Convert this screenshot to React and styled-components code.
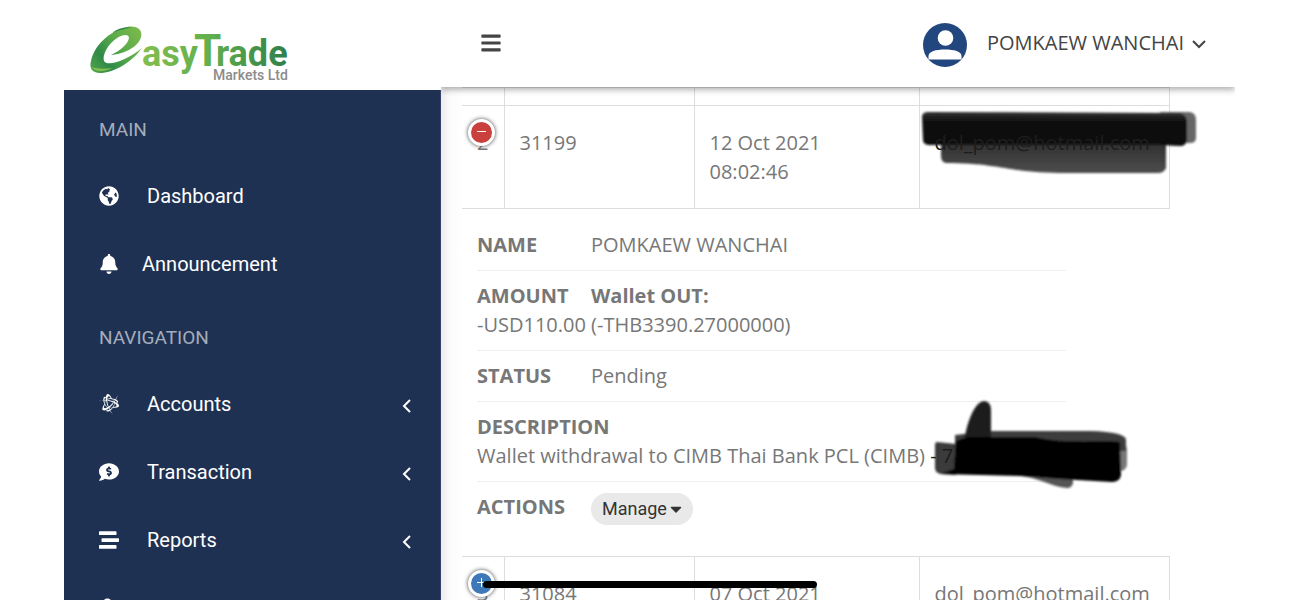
import React from "react";
import styled, { createGlobalStyle } from "styled-components";
import { FaBell, FaBattleNet, FaCommentDollar, FaStream, FaBars, FaCaretDown, FaGlobeAmericas, FaUserCog } from "react-icons/fa";

const Global = createGlobalStyle`
  *, *::before, *::after { box-sizing: border-box; }
  body { margin: 0; background: #fff; font-family: "Open Sans", sans-serif; color: #777; }
`;

const Page = styled.div`
  display: grid;
  grid-template-columns: minmax(240px, 377px) minmax(0, 1fr);
  height: 100vh;
  overflow: hidden;
  padding: 0 64px;
  background: #fff;
`;

const Sidebar = styled.aside`
  display: flex;
  flex-direction: column;
  min-height: 0;
`;

const Brand = styled.a`
  display: block;
  flex: none;
  height: 90px;
  padding: 20px 0 0 20px;
  svg { display: block; }
`;

const Nav = styled.nav`
  flex: 1;
  min-height: 0;
  overflow: hidden;
  background: #1f3152;
  border-right: 1px solid #34426f;
  font-family: Roboto, sans-serif;
`;

const NavHeading = styled.h2`
  margin: 0;
  padding: 8px 35px 0;
  font-size: 19px;
  font-weight: 400;
  line-height: 64px;
  color: #a5adba;
`;

const NavLink = styled.a`
  display: flex;
  align-items: center;
  height: 68px;
  padding: 0 28px 0 35px;
  color: #fff;
  font-size: 20px;
  text-decoration: none;
  gap: ${(p) => (p.$tight ? "23px" : "28px")};
  > svg:first-child { flex: none; }
`;

const NavLabel = styled.span`
  flex: 1;
`;

const Chevron = styled.svg`
  flex: none;
  margin-top: 4px;
`;

const Main = styled.main`
  display: flex;
  flex-direction: column;
  min-width: 0;
  min-height: 0;
`;

const TopBar = styled.header`
  position: relative;
  z-index: 2;
  flex: none;
  display: flex;
  align-items: center;
  justify-content: space-between;
  height: 87px;
  padding: 0 29px 2px 39px;
  background: #fff;
  box-shadow: 0 3px 6px rgba(0, 0, 0, 0.3);
  clip-path: inset(0 0 -12px 0);
`;

const IconButton = styled.button`
  display: flex;
  padding: 0;
  border: 0;
  background: none;
  color: #444;
`;

const UserButton = styled(IconButton)`
  align-items: center;
  padding-top: 4px;
  font: 400 20px "Open Sans", sans-serif;
  color: #444;
`;

const UserName = styled.span`
  margin: 0 8px 0 20px;
  line-height: 28px;
  padding-bottom: 4px;
`;

const Content = styled.section`
  flex: 1;
  min-height: 0;
  overflow: hidden;
  padding: 0 65px 0 21px;
  background: linear-gradient(90deg, #ececec 0, #fbfbfb 9px, #fff 20px);
`;

const Table = styled.table`
  width: 100%;
  table-layout: fixed;
  border-collapse: collapse;
  font-size: 20px;
  line-height: 29px;
`;

const Column = styled.col`
  width: ${(p) => p.$width};
`;

const Cell = styled.td`
  position: relative;
  height: ${(p) => (p.$stub ? "18px" : "103px")};
  padding: ${(p) => (p.$stub ? "0" : "22px 15px")};
  border: 1px solid #ddd;
  vertical-align: top;
  &:first-child { border-left: 0; }
`;

const DetailCell = styled.td`
  padding: 11px 104px 20px 15px;
`;

const Toggle = styled.button`
  position: absolute;
  top: 13px;
  left: 6px;
  display: flex;
  align-items: center;
  justify-content: center;
  width: 27px;
  height: 27px;
  padding: 0;
  border: 3px solid #fff;
  border-radius: 50%;
  background: ${(p) => (p.$open ? "#c9403c" : "#3f78b8")};
  box-shadow: 0 0 4px #444;
`;

const Details = styled.ul`
  margin: 0;
  padding: 0;
  list-style: none;
`;

const Detail = styled.li`
  padding: 10px 0 11px;
  border-bottom: 1px solid #efefef;
  white-space: nowrap;
  &:last-child { border-bottom: 0; }
`;

const Term = styled.strong`
  display: inline-block;
  min-width: 114px;
  font-weight: 700;
`;

const Manage = styled.button`
  display: inline-flex;
  align-items: center;
  height: 32px;
  padding: 0 8px 0 11px;
  border: 0;
  border-radius: 16px;
  background: #e9e9e9;
  color: #333;
  font: 400 18px Roboto, sans-serif;
  vertical-align: middle;
`;

const Scribble = styled.svg`
  position: absolute;
  z-index: 3;
  left: ${(p) => p.$left}px;
  top: ${(p) => p.$top}px;
  overflow: visible;
  pointer-events: none;
`;

const Anchor = styled.span`
  position: relative;
`;

const Inked = styled.span`
  position: relative;
  z-index: 4;
  color: #1d1d1d;
`;

const HomeBar = styled.div`
  position: fixed;
  z-index: 5;
  bottom: 12px;
  left: 50%;
  width: 334px;
  height: 7px;
  border-radius: 4px;
  background: #000;
  transform: translateX(-50%);
`;

function Logo() {
  return (
    <svg width="212" height="64" viewBox="84 20 212 64" role="img" aria-label="EasyTrade Markets Ltd">
      <defs>
        <linearGradient id="word" gradientUnits="userSpaceOnUse" x1="142" y1="0" x2="290" y2="0">
          <stop offset="0" stopColor="#83bd50" />
          <stop offset="0.45" stopColor="#62b04c" />
          <stop offset="1" stopColor="#2f7d4a" />
        </linearGradient>
        <linearGradient id="swoosh" gradientUnits="userSpaceOnUse" x1="92" y1="70" x2="140" y2="30">
          <stop offset="0" stopColor="#4fa54a" />
          <stop offset="0.25" stopColor="#2f8a48" />
          <stop offset="0.6" stopColor="#5aab4a" />
          <stop offset="1" stopColor="#7cba4c" />
        </linearGradient>
      </defs>
      <path fill="url(#swoosh)" d="M142 48C131 63 113 73 100 73C92 73 89 68 91 61C94 46 109 31 127 27C137 25 143 30 141 37C139 46 125 54 111 55C120 51 128 44 129 38C129 34 123 34 117 38C108 44 102 55 104 61C107 67 126 61 142 48Z" />
      <path fill="#86c04f" d="M92 67C94 72 104 72 113 68C104 69 96 69 92 67Z" />
      <path fill="#2e8547" d="M112 33C118 28 127 26 132 28C127 28 119 30 112 33Z" />
      <g fill="url(#word)" fontFamily="Roboto, sans-serif" fontWeight="700">
        <text x="142" y="66" fontSize="36">asy</text>
        <text x="194" y="66" fontSize="44">T</text>
        <text x="216" y="66" fontSize="36">rade</text>
      </g>
      <text x="213" y="80" fill="#8b8b8b" fontFamily="Roboto, sans-serif" fontWeight="500" fontSize="14">Markets Ltd</text>
    </svg>
  );
}

function AngleLeft() {
  return (
    <Chevron width="10" height="14" viewBox="0 0 10 14" fill="none" stroke="#fff" strokeWidth="2" aria-hidden="true">
      <path d="M8 1L2 7L8 13" />
    </Chevron>
  );
}

function Avatar() {
  return (
    <svg width="44" height="44" viewBox="0 0 44 44" aria-hidden="true">
      <circle cx="22" cy="22" r="22" fill="#22477f" />
      <circle cx="22.500" cy="15" r="7.800" fill="#fff" />
      <path fill="#fff" d="M5.500 36.500V33C5.500 28.500 13 26.500 22 26.500S38.500 28.500 38.500 33V36.500Z" />
    </svg>
  );
}

function NavItem({ icon: Icon, label, tight, nested, size = 20 }) {
  return (
    <NavLink href="#" $tight={tight}>
      <Icon size={size} />
      <NavLabel>{label}</NavLabel>
      {nested && <AngleLeft />}
    </NavLink>
  );
}

function RowToggle({ open }) {
  return (
    <Toggle $open={open} aria-label={open ? "Collapse row" : "Expand row"}>
      <svg width="11" height="11" viewBox="0 0 11 11" stroke="#fff" strokeWidth="1" aria-hidden="true">
        <path d={open ? "M1 4.500H10" : "M1 4.500H10M5.500 0V9"} />
      </svg>
    </Toggle>
  );
}

function EmailInk() {
  return (
    <Scribble $left={0} $top={4} width="280" height="66" viewBox="920 110 280 66" aria-hidden="true">
      <defs>
        <filter id="soft" x="-5%" y="-10%" width="110%" height="120%"><feGaussianBlur stdDeviation="1" /></filter>
        <linearGradient id="marker" x1="0" y1="0" x2="0" y2="1">
          <stop offset="0" stopColor="#333" />
          <stop offset="0.3" stopColor="#0c0c0c" />
          <stop offset="1" stopColor="#080808" />
        </linearGradient>
        <linearGradient id="under" x1="0" y1="0" x2="0" y2="1">
          <stop offset="0" stopColor="#2c2c2c" />
          <stop offset="0.7" stopColor="#444" />
          <stop offset="1" stopColor="#4c4c4c" />
        </linearGradient>
      </defs>
      <g filter="url(#soft)">
        <path fill="url(#under)" d="M941 140H1166V168Q1164 173 1158 173H1060C1010 173 1000 163 946 163Q941 162 941 156Z" />
        <path fill="#666" d="M1160 112H1190Q1196 113 1196 120V138Q1196 143 1190 143H1160Z" />
        <path fill="url(#marker)" d="M922 116Q923 112 928 112L1180 113Q1187 115 1187 122V140Q1186 146 1180 146L1160 145L928 145Q923 144 923 140Z" />
      </g>
    </Scribble>
  );
}

function AccountInk() {
  return (
    <Scribble $left={453} $top={-43} width="204" height="94" viewBox="930 398 204 94" aria-hidden="true">
      <g filter="url(#soft)">
        <path fill="#3a3a3a" d="M937 441L956 443V474L941 473Q935 472 935 467V445Q935 441 937 441Z" />
        <path fill="#555" d="M1018 474L1073 470L1073 482Q1072 487 1067 487C1052 486 1040 477 1018 474Z" />
        <path fill="#777" d="M1115 436Q1127 440 1127 448V464Q1126 471 1116 471Z" />
        <path fill="#3c3c3c" d="M955 434L990 430H1090Q1126 431 1126 439V450H990L955 450Z" />
        <path fill="#1c1c1c" d="M963 450C965 424 974 401 984 400Q991 400 991 410V450Z" />
        <path fill="#020202" d="M956 440Q964 436 975 436H1035C1060 443 1095 439 1120 441L1121 474Q1120 481 1112 481L1060 478L1020 475L940 473L954 468Z" />
      </g>
    </Scribble>
  );
}

export default function App() {
  return (
    <>
      <Global />
      <Page>
        <Sidebar>
          <Brand href="#"><Logo /></Brand>
          <Nav>
            <NavHeading>MAIN</NavHeading>
            <NavItem icon={FaGlobeAmericas} label="Dashboard" />
            <NavItem icon={FaBell} label="Announcement" tight />
            <NavHeading>NAVIGATION</NavHeading>
            <NavItem icon={FaBattleNet} label="Accounts" nested />
            <NavItem icon={FaCommentDollar} label="Transaction" nested />
            <NavItem icon={FaStream} label="Reports" nested />
            <NavItem icon={FaUserCog} size={24} nested />
          </Nav>
        </Sidebar>
        <Main>
          <TopBar>
            <IconButton aria-label="Toggle menu"><FaBars size={22} /></IconButton>
            <UserButton>
              <Avatar />
              <UserName>POMKAEW WANCHAI</UserName>
              <svg width="14" height="10" viewBox="0 0 14 10" fill="none" stroke="#444" strokeWidth="2" aria-hidden="true"><path d="M1 1L7 7L13 1" /></svg>
            </UserButton>
          </TopBar>
          <Content>
            <Table>
              <colgroup>
                <Column $width="42px" /><Column $width="190px" /><Column $width="225px" /><Column $width="auto" />
              </colgroup>
              <tbody>
                <tr><Cell $stub /><Cell $stub /><Cell $stub /><Cell $stub /></tr>
                <tr>
                  <Cell><RowToggle open />2</Cell>
                  <Cell>31199</Cell>
                  <Cell>12 Oct 2021<br />08:02:46</Cell>
                  <Cell>
                    <Inked>dol_pom@hotmail.com</Inked>
                    <EmailInk />
                  </Cell>
                </tr>
                <tr>
                  <DetailCell colSpan={4}>
                    <Details>
                      <Detail><Term>NAME</Term>POMKAEW WANCHAI</Detail>
                      <Detail><Term>AMOUNT</Term><b>Wallet OUT:</b><br />-USD110.00 (-THB3390.27000000)</Detail>
                      <Detail><Term>STATUS</Term>Pending</Detail>
                      <Detail>
                        <Term>DESCRIPTION</Term><br />
                        <Anchor>Wallet withdrawal to CIMB Thai Bank PCL (CIMB) <Inked>- 7</Inked><AccountInk /></Anchor>
                      </Detail>
                      <Detail><Term>ACTIONS</Term><Manage>Manage<FaCaretDown size={18} /></Manage></Detail>
                    </Details>
                  </DetailCell>
                </tr>
                <tr>
                  <Cell><RowToggle />3</Cell>
                  <Cell>31084</Cell>
                  <Cell>07 Oct 2021</Cell>
                  <Cell>dol_pom@hotmail.com</Cell>
                </tr>
              </tbody>
            </Table>
          </Content>
        </Main>
      </Page>
      <HomeBar />
    </>
  );
}
